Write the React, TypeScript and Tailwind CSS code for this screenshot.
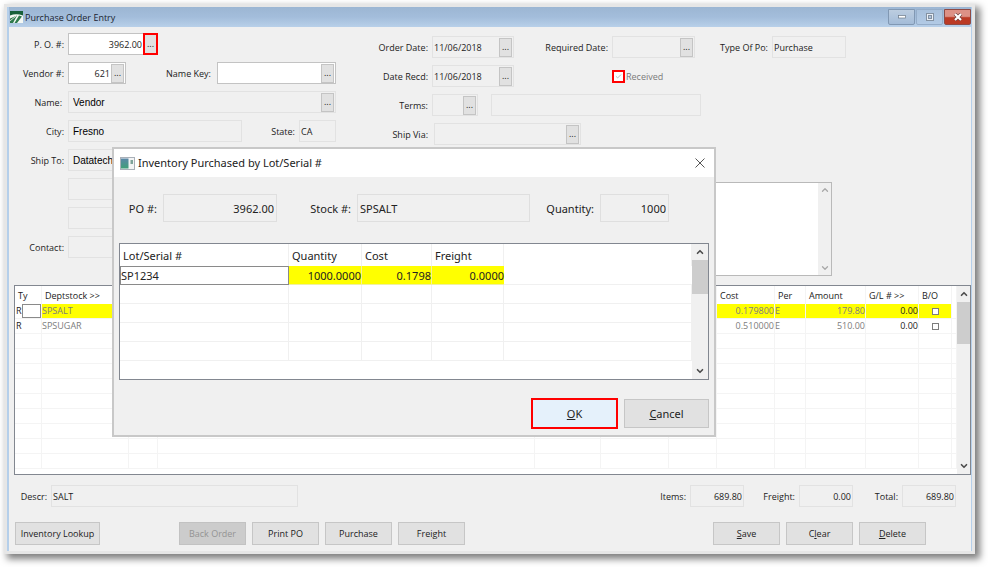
import { useState } from 'react';
import type { ReactNode } from 'react';
import { Check, ChevronDown, ChevronUp } from 'lucide-react';

type Line = {
  type: string;
  stock: string;
  cost: string;
  per: string;
  amount: string;
  gl: string;
};

const LINES: Line[] = [
  { type: 'R', stock: 'SPSALT', cost: '0.179800', per: 'E', amount: '179.80', gl: '0.00' },
  { type: 'R', stock: 'SPSUGAR', cost: '0.510000', per: 'E', amount: '510.00', gl: '0.00' },
];

const EMPTY_LINES = Array.from({ length: 9 }, (_, i) => i);
const EMPTY_LOTS = Array.from({ length: 4 }, (_, i) => i);

function Field({
  id,
  value = '',
  width,
  editable = false,
  right = false,
  arial = false,
  lookup = false,
  flagged = false,
}: {
  id: string;
  value?: string;
  width: string;
  editable?: boolean;
  right?: boolean;
  arial?: boolean;
  lookup?: boolean;
  flagged?: boolean;
}) {
  const font = arial
    ? "pl-1 font-['Liberation_Sans',sans-serif] text-[10px] text-black"
    : right
      ? 'pr-px text-right'
      : 'pl-px';

  return (
    <div
      className={`flex h-[22px] min-w-0 items-center border ${width} ${
        editable ? 'border-[#c3c3c3] bg-white' : 'border-[#e2e2e2] bg-[#f0f0f0]'
      }`}
    >
      <input
        id={id}
        type="text"
        defaultValue={value}
        readOnly={!editable}
        className={`h-full w-full min-w-0 flex-1 bg-transparent outline-none ${font}`}
      />
      {lookup && (
        <button
          type="button"
          aria-label={`Look up ${id}`}
          className={
            flagged
              ? '-my-px -mr-px h-[22px] w-[15px] shrink-0 border-2 border-[#ff0000] bg-[#e1e1e1] leading-4'
              : 'mr-px h-[19px] w-[13px] shrink-0 border border-[#c4c4c4] bg-[#e1e1e1] leading-4'
          }
        >
          ...
        </button>
      )}
    </div>
  );
}

function Label({ htmlFor, width = '', children }: { htmlFor: string; width?: string; children: ReactNode }) {
  return (
    <label htmlFor={htmlFor} className={`shrink-0 pt-0.5 text-right whitespace-nowrap ${width}`}>
      {children}
    </label>
  );
}

function PushButton({
  children,
  width = 'w-[67px]',
  disabled = false,
}: {
  children: ReactNode;
  width?: string;
  disabled?: boolean;
}) {
  return (
    <button
      type="button"
      disabled={disabled}
      className={`h-[23px] shrink-0 border pt-px whitespace-nowrap ${width} ${
        disabled ? 'border-[#c2c2c2] bg-[#cccccc] text-[#949494]' : 'border-[#c6c6c6] bg-[#e1e1e1]'
      }`}
    >
      {children}
    </button>
  );
}

function TitleBar() {
  return (
    <header className="flex h-5 items-center bg-linear-to-b from-[#9cb6d3] via-[#a3bddb] to-[#b8d0e9] pl-px">
      <svg viewBox="0 0 13 12" className="h-3 w-[13px]" aria-hidden="true">
        <rect width="13" height="12" fill="#17603a" />
        <path d="M0 4.5 Q6 2 13 4.5 V12 H0Z" fill="#f4f8f4" />
        <path d="M0 7.5 L7 4.5 L3 12 H0Z M9 4.5 L12 5.5 L7 12 H4.5Z" fill="#2f7a4c" />
        <path d="M0 9.8 L6 5.2 M8.5 12 L13 7" stroke="#f4f8f4" strokeWidth="0.8" />
      </svg>
      <h1 className="ml-0.5 pt-0.5 text-[#1b2430]">Purchase Order Entry</h1>
      <div className="ml-auto flex gap-px">
        <button
          type="button"
          aria-label="Minimize"
          className="flex h-4 w-[27px] items-center justify-center rounded-b-xs border border-[#8198b3] bg-linear-to-b from-[#bccde0] to-[#a4bcd8]"
        >
          <svg viewBox="0 0 10 6" className="h-1.5 w-2.5">
            <rect x="1.5" y="1.5" width="7" height="2.5" fill="#fff" stroke="#6c7887" strokeWidth="0.7" />
          </svg>
        </button>
        <button
          type="button"
          aria-label="Maximize"
          className="flex h-4 w-[27px] items-center justify-center rounded-b-xs border border-[#95adc9] bg-linear-to-b from-[#a9c1dc] to-[#b2cae5]"
        >
          <svg viewBox="0 0 8 8" className="size-2">
            <rect x="0.5" y="0.5" width="7" height="7" fill="#e8eef5" stroke="#8492a2" />
            <rect x="2.5" y="2.5" width="3" height="3" fill="#b0c4dc" stroke="#8492a2" />
          </svg>
        </button>
        <button
          type="button"
          aria-label="Close"
          className="flex h-4 w-[27px] items-center justify-center rounded-b-xs border border-[#8e4a45] bg-linear-to-b from-[#dd9186] from-45% to-[#bb3a25] to-55%"
        >
          <svg viewBox="0 0 10 8" className="h-2 w-2.5">
            <path d="M2 1 L8 7 M8 1 L2 7" stroke="#6a3a3a" strokeWidth="3.4" />
            <path d="M2 1 L8 7 M8 1 L2 7" stroke="#fff" strokeWidth="2.2" />
          </svg>
        </button>
      </div>
    </header>
  );
}

function VendorColumn() {
  return (
    <div className="flex w-[327px] shrink-0 flex-col gap-[7px] pt-1.5">
      <div className="flex items-center gap-1">
        <Label htmlFor="po" width="w-[55px]">P. O. #:</Label>
        <Field id="po" value="3962.00" width="w-[90px]" editable right lookup flagged />
      </div>
      <div className="flex items-center gap-1">
        <Label htmlFor="vendor-no" width="w-[55px]">Vendor #:</Label>
        <Field id="vendor-no" value="621" width="w-[58px]" editable right lookup />
        <Label htmlFor="name-key" width="w-[81px]">Name Key:</Label>
        <Field id="name-key" width="ml-0.5 flex-1" editable lookup />
      </div>
      <div className="flex items-center gap-1">
        <Label htmlFor="name" width="w-[55px] pr-0.5">Name:</Label>
        <Field id="name" value="Vendor" width="flex-1" arial lookup />
      </div>
      <div className="flex items-center gap-1">
        <Label htmlFor="city" width="w-[55px]">City:</Label>
        <Field id="city" value="Fresno" width="flex-1" arial />
        <Label htmlFor="state" width="w-[49px]">State:</Label>
        <Field id="state" value="CA" width="w-[37px]" />
      </div>
      <div className="flex items-center gap-1">
        <Label htmlFor="ship-to" width="w-[55px]">Ship To:</Label>
        <Field id="ship-to" value="Datatech" width="flex-1" arial />
      </div>
      <div className="flex pl-[59px]">
        <Field id="ship-to-2" width="flex-1" />
      </div>
      <div className="flex pl-[59px]">
        <Field id="ship-to-3" width="flex-1" />
      </div>
      <div className="flex items-center gap-1">
        <Label htmlFor="contact" width="w-[55px]">Contact:</Label>
        <Field id="contact" width="flex-1" />
      </div>
    </div>
  );
}

function OrderColumn() {
  return (
    <div className="flex min-w-0 flex-1 flex-col gap-[7px] pt-[9px]">
      <div className="flex items-center gap-1">
        <Label htmlFor="order-date" width="w-[92px]">Order Date:</Label>
        <Field id="order-date" value="11/06/2018" width="w-[82px]" lookup />
        <Label htmlFor="required-date" width="w-[90px]">Required Date:</Label>
        <Field id="required-date" width="w-[83px]" lookup />
        <Label htmlFor="po-type" width="w-[69px]">Type Of Po:</Label>
        <Field id="po-type" value="Purchase" width="w-[74px]" />
      </div>
      <div className="flex items-center gap-1">
        <Label htmlFor="date-recd" width="w-[92px]">Date Recd:</Label>
        <Field id="date-recd" value="11/06/2018" width="w-[82px]" lookup />
        <label className="ml-[94px] flex items-center gap-px text-[#7b7b7b]">
          <span className="relative flex">
            <input
              type="checkbox"
              checked
              readOnly
              disabled
              className="size-[13px] appearance-none border-2 border-[#ff0000] bg-white"
            />
            <Check
              className="pointer-events-none absolute top-[3px] left-[3px] size-[7px] text-[#b0b0b0]"
              strokeWidth={3}
            />
          </span>
          <span className="pt-px">Received</span>
        </label>
      </div>
      <div className="flex items-center gap-1">
        <Label htmlFor="terms" width="w-[92px]">Terms:</Label>
        <Field id="terms" width="w-[46px]" lookup />
        <Field id="terms-text" width="ml-[9px] w-[210px]" />
      </div>
      <div className="flex items-center gap-1">
        <Label htmlFor="ship-via" width="w-[92px]">Ship Via:</Label>
        <Field id="ship-via" width="ml-0.5 w-[147px]" lookup />
      </div>
      <div className="mt-[30px] ml-24 flex h-[94px] w-[400px] border border-[#b9b9b9] bg-white">
        <textarea aria-label="Comments" className="min-w-0 flex-1 resize-none outline-none" />
        <div className="flex w-[13px] flex-col items-center justify-between bg-[#f0f0f0] py-0.5 text-[#a8a8a8]">
          <ChevronUp className="size-2.5" strokeWidth={3} />
          <ChevronDown className="size-2.5" strokeWidth={3} />
        </div>
      </div>
    </div>
  );
}

function ScrollBar({ width, thumb }: { width: string; thumb: string }) {
  return (
    <div className={`flex shrink-0 flex-col items-center bg-[#f0f0f0] text-[#4d4d4d] ${width}`}>
      <div className="flex h-4 items-center">
        <ChevronUp className="size-2.5" strokeWidth={4} />
      </div>
      <div className={`w-full bg-[#cdcdcd] ${thumb}`} />
      <div className="mt-auto flex h-4 items-center">
        <ChevronDown className="size-2.5" strokeWidth={4} />
      </div>
    </div>
  );
}

function LineItems() {
  const cell = 'border-r border-b border-[#f4f4f4]';
  return (
    <div className="mt-[9px] ml-[5px] flex h-[190px] overflow-hidden border border-[#828790] bg-white">
      <div className="min-w-0 flex-1 overflow-hidden">
        <table className="w-full table-fixed border-separate border-spacing-0">
          <colgroup>
            <col className="w-[27px]" />
            <col className="w-[87px]" />
            <col className="w-[29px]" />
            <col />
            <col className="w-[66px]" />
            <col className="w-[68px]" />
            <col className="w-[48px]" />
            <col className="w-[58px]" />
            <col className="w-[31px]" />
            <col className="w-[60px]" />
            <col className="w-[53px]" />
            <col className="w-[33px]" />
            <col className="w-[5px]" />
          </colgroup>
          <thead>
            <tr className="h-[18px] text-left *:border-r *:border-[#f4f4f4] *:p-0 *:pt-0.5 *:pl-[3px] *:font-normal *:whitespace-nowrap">
              <th>Ty</th>
              <th>Deptstock &gt;&gt;</th>
              <th />
              <th />
              <th />
              <th />
              <th />
              <th>Cost</th>
              <th>Per</th>
              <th>Amount</th>
              <th>G/L # &gt;&gt;</th>
              <th>B/O</th>
              <th />
            </tr>
          </thead>
          <tbody>
            {LINES.map((line, i) => {
              const current = i === 0;
              const tone = `${cell} p-0 text-[#7d7d7d] ${current ? 'bg-[#ffff00]' : ''}`;
              return (
                <tr key={line.stock} className="h-[15px] leading-[14px]">
                  <td className={`${cell} p-0 pl-px`}>
                    {current ? (
                      <div className="flex">
                        <span className="w-1.5">{line.type}</span>
                        <input
                          aria-label="Type"
                          className="h-3.5 min-w-0 flex-1 border border-[#8a8a8a] bg-white outline-none"
                        />
                      </div>
                    ) : (
                      line.type
                    )}
                  </td>
                  <td className={tone}>{line.stock}</td>
                  <td className={tone} />
                  <td className={tone} />
                  <td className={tone} />
                  <td className={tone} />
                  <td className={tone} />
                  <td className={`${tone} text-right`}>{line.cost}</td>
                  <td className={tone}>{line.per}</td>
                  <td className={`${tone} text-right`}>{line.amount}</td>
                  <td className={`${cell} p-0 text-right ${current ? 'bg-[#ffff00]' : ''}`}>{line.gl}</td>
                  <td className={`${tone} text-center`}>
                    <input
                      type="checkbox"
                      aria-label={`Back order ${line.stock}`}
                      className="mx-auto block size-[7px] appearance-none border border-[#7d7d7d] bg-white"
                    />
                  </td>
                  <td className={`${cell} p-0`} />
                </tr>
              );
            })}
            {EMPTY_LINES.map((n) => (
              <tr key={n} className="h-[15px] *:border-r *:border-b *:border-[#f4f4f4] *:p-0">
                <td /><td /><td /><td /><td /><td /><td /><td /><td /><td /><td /><td /><td />
              </tr>
            ))}
          </tbody>
        </table>
      </div>
      <ScrollBar width="w-[13px]" thumb="h-[42px]" />
    </div>
  );
}

function Totals() {
  return (
    <div className="mt-2.5 flex items-center gap-1 pr-[15px] pl-[11px]">
      <Label htmlFor="descr" width="w-[27px]">Descr:</Label>
      <Field id="descr" value="SALT" width="w-[247px]" />
      <div className="ml-auto flex items-center gap-1">
        <Label htmlFor="items">Items:</Label>
        <Field id="items" value="689.80" width="w-[54px]" right />
        <Label htmlFor="freight" width="w-[47px]">Freight:</Label>
        <Field id="freight" value="0.00" width="w-[54px]" right />
        <Label htmlFor="total" width="w-[41px]">Total:</Label>
        <Field id="total" value="689.80" width="w-[54px]" right />
      </div>
    </div>
  );
}

function Actions() {
  return (
    <div className="mt-[15px] flex gap-1.5 pr-[45px] pb-1.5 pl-1.5">
      <PushButton width="w-[85px]">Inventory Lookup</PushButton>
      <div className="ml-[73px] flex gap-1.5">
        <PushButton disabled>Back Order</PushButton>
        <PushButton>Print PO</PushButton>
        <PushButton>Purchase</PushButton>
        <PushButton>Freight</PushButton>
      </div>
      <div className="ml-auto flex gap-1.5">
        <PushButton><u>S</u>ave</PushButton>
        <PushButton>C<u>l</u>ear</PushButton>
        <PushButton><u>D</u>elete</PushButton>
      </div>
    </div>
  );
}

function LotDialog({ onClose }: { onClose: () => void }) {
  const field = 'h-7 min-w-0 border border-[#dfdfdf] bg-[#f0f0f0] px-0.5 outline-none';
  return (
    <section
      role="dialog"
      aria-label="Inventory Purchased by Lot/Serial #"
      className="absolute top-[140px] left-[105px] w-[604px] border-2 border-[#c8c8c8] bg-[#f0f0f0] font-['Noto_Sans','Open_Sans',sans-serif] text-[11px]"
    >
      <div className="flex h-7 items-center bg-white pr-[9px] pl-1.5">
        <svg viewBox="0 0 15 13" className="h-[13px] w-[15px]" aria-hidden="true">
          <defs>
            <linearGradient id="pane" x1="0" y1="0" x2="0" y2="1">
              <stop offset="0" stopColor="#5b87a8" />
              <stop offset="1" stopColor="#3f9f78" />
            </linearGradient>
          </defs>
          <rect x="0.5" y="0.5" width="14" height="12" fill="#f3f4f5" stroke="#a9b0b8" />
          <rect x="1" y="1.5" width="7.5" height="10" fill="url(#pane)" />
          <rect x="10.5" y="3" width="2.5" height="4" fill="#7ea39a" />
        </svg>
        <h2 className="ml-[3px]">Inventory Purchased by Lot/Serial #</h2>
        <button type="button" aria-label="Close dialog" onClick={onClose} className="ml-auto">
          <svg viewBox="0 0 10 10" className="size-2.5">
            <path d="M0.5 0.5 L9.5 9.5 M9.5 0.5 L0.5 9.5" stroke="#555" />
          </svg>
        </button>
      </div>

      <div className="mt-[17px] flex items-center gap-1.5 pr-[45px] pl-3.5">
        <Label htmlFor="lot-po" width="w-[29px]">PO #:</Label>
        <input id="lot-po" readOnly value="3962.00" className={`${field} w-[114px] text-right`} />
        <Label htmlFor="lot-stock" width="w-[68px]">Stock #:</Label>
        <input id="lot-stock" readOnly value="SPSALT" className={`${field} flex-1`} />
        <Label htmlFor="lot-qty" width="w-[58px]">Quantity:</Label>
        <input id="lot-qty" readOnly value="1000" className={`${field} w-[69px] text-right`} />
      </div>

      <div className="mx-[5px] mt-[21px] flex h-[137px] overflow-hidden border border-[#828790] bg-white">
        <table className="h-fit min-w-0 flex-1 table-fixed border-separate border-spacing-0">
          <colgroup>
            <col className="w-[169px]" />
            <col className="w-[73px]" />
            <col className="w-[70px]" />
            <col className="w-[72px]" />
            <col />
          </colgroup>
          <thead>
            <tr className="h-[22px] text-left *:border-r *:border-[#f0f0f0] *:p-0 *:pt-0.5 *:pl-[3px] *:font-normal">
              <th>Lot/Serial #</th>
              <th>Quantity</th>
              <th>Cost</th>
              <th>Freight</th>
              <th />
            </tr>
          </thead>
          <tbody>
            <tr className="h-[19px] leading-[17px] *:p-0">
              <td className="border border-[#8a8a8a]">SP1234</td>
              <td className="border-r border-b border-[#f0f0a0] bg-[#ffff00] text-right">1000.0000</td>
              <td className="border-r border-b border-[#f0f0a0] bg-[#ffff00] text-right">0.1798</td>
              <td className="border-b border-[#f0f0a0] bg-[#ffff00] text-right">0.0000</td>
              <td className="border-b border-[#f0f0f0]" />
            </tr>
            {EMPTY_LOTS.map((n) => (
              <tr key={n} className="h-[19px] *:border-r *:border-b *:border-[#f0f0f0] *:p-0">
                <td /><td /><td /><td /><td />
              </tr>
            ))}
          </tbody>
        </table>
        <ScrollBar width="w-4" thumb="h-[34px]" />
      </div>

      <div className="mt-[18px] mb-1.5 flex items-center justify-end gap-1.5 pr-[5px]">
        <button type="button" onClick={onClose} className="h-[31px] w-[87px] border-2 border-[#ff0000] bg-[#e5f1fb]">
          <u>O</u>K
        </button>
        <button type="button" onClick={onClose} className="h-[29px] w-[85px] border border-[#c6c6c6] bg-[#e1e1e1]">
          <u>C</u>ancel
        </button>
      </div>
    </section>
  );
}

export default function App() {
  const [lotsOpen, setLotsOpen] = useState(true);

  return (
    <div className="min-h-screen bg-white pt-1 pr-[13px] pl-1 font-['Open_Sans','Noto_Sans',sans-serif] text-[9px] leading-3 text-[#222]">
      <main className="relative border-[3px] border-[#e6e6e6] bg-[#f0f0f0] shadow-[4px_4px_7px_1px_rgba(0,0,0,0.5)]">
        <div className="border-r border-l-2 border-[#b5cfea]">
          <TitleBar />
          <div className="flex">
            <VendorColumn />
            <OrderColumn />
          </div>
          <LineItems />
          <Totals />
          <Actions />
        </div>
        {lotsOpen && <LotDialog onClose={() => setLotsOpen(false)} />}
      </main>
    </div>
  );
}
